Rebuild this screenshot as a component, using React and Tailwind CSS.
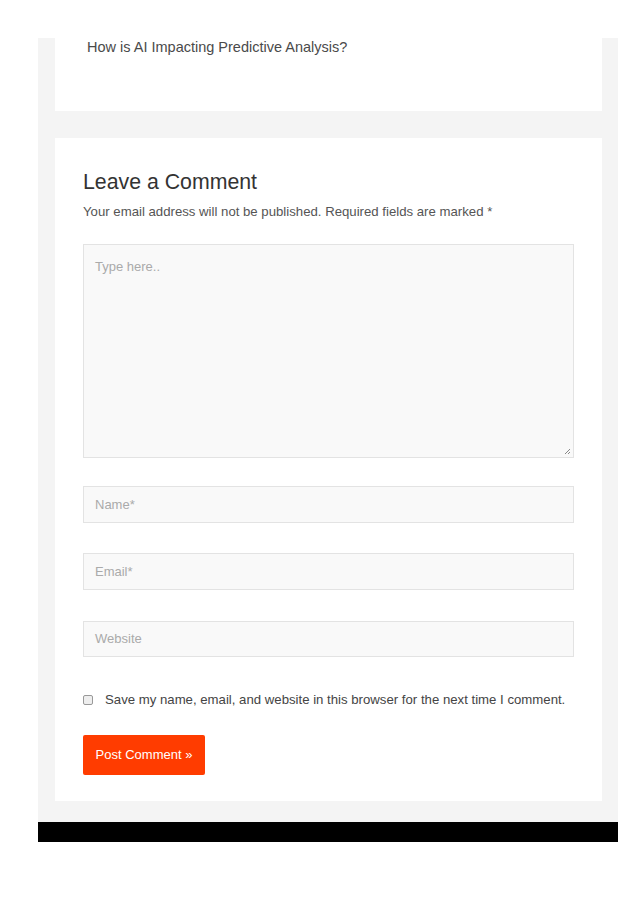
export default function App() {
  const font = { fontFamily: '"Liberation Sans", Arial, sans-serif' };
  return (
    <div className="w-[638px] h-[903px] bg-white pt-[38px]" style={font}>
      <div className="ml-[38px] w-[580px] bg-[#f4f4f4] pl-[17px] pr-[16px] pb-[21px]">
        <div className="bg-white h-[73px] pl-[32px] pt-[1px]">
          <p className="text-[14.5px] leading-[16px] text-[#4a4a4a]">How is AI Impacting Predictive Analysis?</p>
        </div>
        <div className="h-[27px]" />
        <div className="bg-white pl-[28px] pr-[28px] pt-[32px] h-[663px]">
          <h2 className="text-[21.3px] leading-[24px] text-[#333]">Leave a Comment</h2>
          <p className="mt-[10px] text-[13.2px] leading-[16px] text-[#555]">
            Your email address will not be published. Required fields are marked *
          </p>
          <div className="mt-[24px] relative h-[214px] border border-[#e3e3e3] bg-[#f9f9f9]">
            <span className="absolute left-[11px] top-[12px] text-[13px] text-[#aaa]">Type here..</span>
            <svg className="absolute right-[2px] bottom-[2px]" width="7" height="7" viewBox="0 0 7 7">
              <path d="M6 1 L1 6 M6 4 L4 6" stroke="#888" strokeWidth="1" />
            </svg>
          </div>
          <div className="mt-[28px] h-[37px] border border-[#e3e3e3] bg-[#f9f9f9] flex items-center pl-[11px] text-[13px] text-[#aaa]">Name*</div>
          <div className="mt-[30px] h-[37px] border border-[#e3e3e3] bg-[#f9f9f9] flex items-center pl-[11px] text-[13px] text-[#aaa]">Email*</div>
          <div className="mt-[31px] h-[36px] border border-[#e3e3e3] bg-[#f9f9f9] flex items-center pl-[11px] text-[13px] text-[#aaa]">Website</div>
          <div className="mt-[35px] flex items-center">
            <div className="w-[10px] h-[10px] border border-[#999] rounded-[2px] bg-[#eee]" />
            <span className="ml-[12px] text-[13.2px] leading-[16px] text-[#444]">Save my name, email, and website in this browser for the next time I comment.</span>
          </div>
          <button className="mt-[27px] h-[40px] w-[122px] bg-[#ff3c00] rounded-[2px] text-white text-[13px]">Post Comment »</button>
        </div>
      </div>
      <div className="ml-[38px] w-[580px] h-[20px] bg-black" />
    </div>
  );
}
